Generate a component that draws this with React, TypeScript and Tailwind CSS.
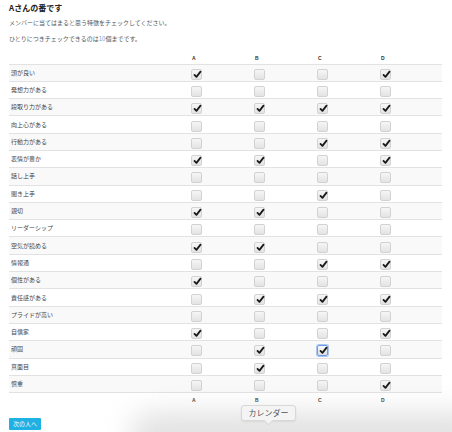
const rows: { label: string; checks: boolean[] }[] = [
  { label: '頭が良い', checks: [true, false, false, true] },
  { label: '発想力がある', checks: [false, false, false, false] },
  { label: '段取り力がある', checks: [true, true, true, true] },
  { label: '向上心がある', checks: [false, false, false, false] },
  { label: '行動力がある', checks: [false, false, true, true] },
  { label: '表情が豊か', checks: [true, true, false, true] },
  { label: '話し上手', checks: [false, false, false, false] },
  { label: '聞き上手', checks: [false, false, true, false] },
  { label: '親切', checks: [true, true, false, false] },
  { label: 'リーダーシップ', checks: [false, false, false, false] },
  { label: '空気が読める', checks: [true, true, false, false] },
  { label: '情報通', checks: [false, false, true, true] },
  { label: '個性がある', checks: [true, false, false, false] },
  { label: '責任感がある', checks: [false, true, true, true] },
  { label: 'プライドが高い', checks: [false, false, false, false] },
  { label: '自信家', checks: [true, false, false, true] },
  { label: '頑固', checks: [false, true, true, false] },
  { label: '真面目', checks: [false, true, false, false] },
  { label: '慎重', checks: [false, false, false, true] },
];

const cols = ['A', 'B', 'C', 'D'];

function Box({ checked, focused }: { checked: boolean; focused?: boolean }) {
  return (
    <span
      className={
        focused
          ? 'relative inline-block w-[11px] h-[11px] rounded-[2px] border border-[#6b9be6] bg-gradient-to-b from-[#f8f8f8] to-[#e0e0e0] shadow-[0_0_0_1px_#a9c6f2]'
          : 'relative inline-block w-[11px] h-[11px] rounded-[2px] border border-[#d2d2d2] bg-gradient-to-b from-[#f6f6f6] to-[#e3e3e3]'
      }
    >
      {checked && (
        <svg viewBox="0 0 12 12" className="absolute left-[1px] top-[0px] w-[9px] h-[9px]">
          <path d="M2 6.5 L4.6 9.2 L10 2.2" fill="none" stroke="#1a1a1a" strokeWidth="2.4" strokeLinecap="round" strokeLinejoin="round" />
        </svg>
      )}
    </span>
  );
}

export default function App() {
  return (
    <div className="relative w-[452px] h-[432px] overflow-hidden bg-white text-[#333] font-['Noto_Sans_CJK_JP','Noto_Sans',sans-serif]">
      <div className="pl-[9px] pt-[3px]">
        <h1 className="text-[8px] leading-[10px] font-bold text-[#222]">Aさんの番です</h1>
        <p className="mt-[6px] text-[6px] leading-[8px] text-[#555]">メンバーに当てはまると思う特徴をチェックしてください。</p>
        <p className="mt-[8px] text-[6px] leading-[8px] text-[#555]">
          ひとりにつきチェックできるのは<span className="text-[#6aa3d8]">10</span>個までです。
        </p>

        <table className="mt-[5px] w-[433px] border-collapse table-fixed">
          <colgroup>
            <col className="w-[181px]" />
            <col className="w-[63px]" />
            <col className="w-[63px]" />
            <col className="w-[63px]" />
            <col className="w-[63px]" />
          </colgroup>
          <thead>
            <tr className="h-[16px]">
              <th />
              {cols.map((c) => (
                <th key={c} className="pl-[2px] text-left align-bottom pb-[3px] text-[5px] leading-[6px] font-bold text-[#333] font-['Liberation_Sans',sans-serif]">
                  {c}
                </th>
              ))}
            </tr>
          </thead>
          <tbody>
            {rows.map((r, i) => (
              <tr key={r.label} className={`h-[17.3px] border-t border-[#e2e2e2] ${i % 2 === 0 ? 'bg-[#f9f9f9]' : 'bg-white'}`}>
                <td className="pl-[2px] text-[6px] leading-[8px] text-[#444] align-middle">{r.label}</td>
                {r.checks.map((ch, j) => (
                  <td key={j} className="pl-[1px] align-middle leading-none">
                    <Box checked={ch} focused={i === 16 && j === 2} />
                  </td>
                ))}
              </tr>
            ))}
            <tr className="h-[14px] border-t border-[#e2e2e2]">
              <td />
              {cols.map((c) => (
                <td key={c} className="pl-[2px] align-middle text-[5px] leading-[6px] font-bold text-[#333] font-['Liberation_Sans',sans-serif]">
                  {c}
                </td>
              ))}
            </tr>
          </tbody>
        </table>

        <button className="mt-[7px] h-[12px] px-[4px] rounded-[1px] bg-[#1fb1e3] text-white text-[6px] leading-[12px]">
          次の人へ
        </button>
      </div>

      {/* bottom shade */}
      <div className="absolute left-[130px] right-[-40px] bottom-[-28px] h-[48px] rounded-full bg-[#d6d6d6] opacity-70 blur-[14px]" />

      {/* tooltip */}
      <div className="absolute left-[241px] top-[405px]">
        <div className="relative w-[55px] h-[16px] rounded-[3px] border border-[#d8d8d8] bg-[#f4f4f4] shadow-[0_1px_2px_rgba(0,0,0,0.08)] flex items-center justify-center text-[8px] text-[#555]">
          カレンダー
          <span className="absolute left-[23px] bottom-[-4px] w-[7px] h-[7px] rotate-45 bg-[#f4f4f4] border-r border-b border-[#d8d8d8]" />
        </div>
      </div>
    </div>
  );
}
